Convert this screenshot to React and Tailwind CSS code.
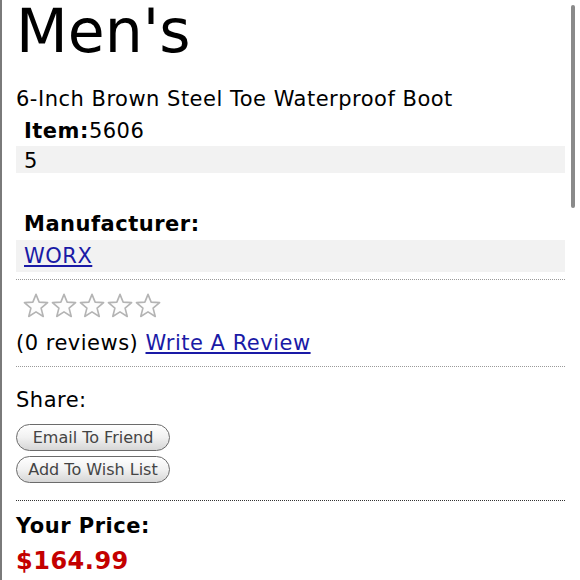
import React from "react";

function Star() {
  return (
    <svg width="26" height="25" viewBox="0 0 24 23" className="shrink-0">
      <polygon
        points="12,1.2 14.9,8.4 22.7,8.9 16.7,13.9 18.7,21.6 12,17.4 5.3,21.6 7.3,13.9 1.3,8.9 9.1,8.4"
        fill="#fdfdfd"
        stroke="#b4b4b4"
        strokeWidth="1.5"
        strokeLinejoin="round"
      />
    </svg>
  );
}

function PillButton({ children }) {
  return (
    <button className="flex h-[27px] w-[154px] items-center justify-center rounded-full border border-[#6b6b6b] bg-gradient-to-b from-white via-[#f1f1f1] to-[#d6d6d6] text-[16px] leading-none text-[#444]">
      {children}
    </button>
  );
}

export default function App() {
  return (
    <div className="relative min-h-[580px] border-l-2 border-[#7a7a7a] bg-white pl-[14px] pr-[15px] font-['DejaVu_Sans',_Verdana,_sans-serif] text-[21px] tracking-[0.5px] text-black">
      {/* scroll thumb */}
      <div className="absolute right-[5px] top-[5px] h-[203px] w-[4px] rounded-full bg-[#8a8a8a]" />

      <h1 className="text-[60px] leading-[1.05] font-normal tracking-normal">Men's</h1>

      <div className="mt-[22px] leading-7">
        6-Inch Brown Steel Toe Waterproof Boot
      </div>

      <div className="mt-[4px] px-2 leading-7">
        <span className="font-bold">Item:</span>5606
      </div>
      <div className="mt-px h-[27px] bg-[#f2f2f2] px-2 pt-[3px] leading-6">
        5
      </div>

      <div className="mt-[37px] px-2 font-bold leading-7">Manufacturer:</div>
      <div className="mt-[2px] h-[32px] bg-[#f2f2f2] px-2 pt-[2px] leading-7">
        <a href="#" className="text-[#1a1aa6] underline">
          WORX
        </a>
      </div>

      <div className="mt-[7px] border-t border-dotted border-[#9a9a9a]" />

      <div className="mt-[13px] flex gap-[2px] pl-[7px]">
        <Star />
        <Star />
        <Star />
        <Star />
        <Star />
      </div>

      <div className="mt-[11px] leading-7">
        (0 reviews){" "}
        <a href="#" className="text-[#1a1aa6] underline">
          Write A Review
        </a>
      </div>

      <div className="mt-[9px] border-t border-dotted border-[#9a9a9a]" />

      <div className="mt-[19px] leading-7">Share:</div>

      <div className="mt-[10px] flex flex-col gap-[5px] tracking-normal">
        <PillButton>Email To Friend</PillButton>
        <PillButton>Add To Wish List</PillButton>
      </div>

      <div className="mt-[17px] border-t border-dotted border-[#333]" />

      <div className="mt-[11px] font-bold leading-7">Your Price:</div>
      <div className="mt-[5px] text-[24px] font-bold leading-8 tracking-[0.5px] text-[#c40000]">
        $164.99
      </div>
    </div>
  );
}
